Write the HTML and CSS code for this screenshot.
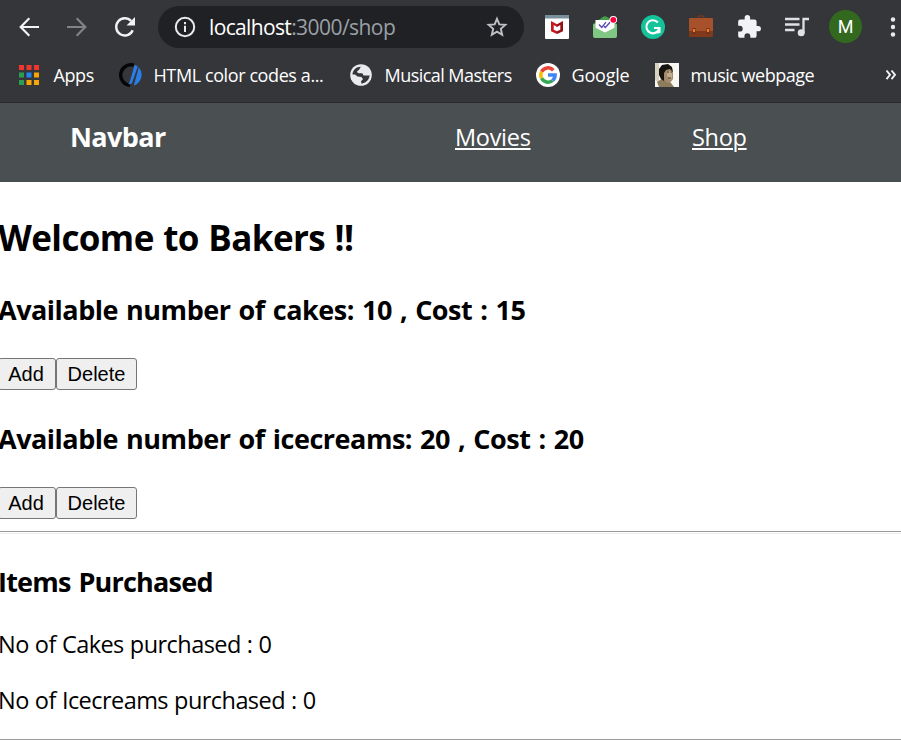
FILE: index.html
```
<!DOCTYPE html>
<html lang="en">
<head>
<meta charset="utf-8">
<title>Bakers</title>
<link rel="stylesheet" href="styles.css">
</head>
<body>
<header class="browser">
  <div class="toolbar">
    <svg class="back" width="20" height="20" viewBox="0 0 20 20" fill="none" stroke="#f1f3f4" stroke-width="2.2"><path d="M20 10H2M10.3 1.2 1.7 10l8.6 8.8"/></svg>
    <svg class="forward" width="20" height="20" viewBox="0 0 20 20" fill="none" stroke="#828386" stroke-width="2.2"><path d="M0 10h18M9.7 1.2l8.6 8.8-8.6 8.8"/></svg>
    <svg class="reload" width="22" height="22" viewBox="0 0 22 22"><path d="M18.7 14.2A8.6 8.6 0 1 1 17.1 5" fill="none" stroke="#f1f3f4" stroke-width="2.4"/><path d="M21 1v8.5h-8.5z" fill="#f1f3f4"/></svg>
    <div class="omnibox">
      <svg width="22" height="22" viewBox="0 0 22 22"><circle cx="11" cy="11" r="9.2" fill="none" stroke="#e8eaed" stroke-width="2"/><path d="M10 9.8h2V16h-2zM10 6h2v2.2h-2z" fill="#e8eaed"/></svg>
      <span class="url"><span class="host">localhost</span><span class="path">:3000/shop</span></span>
      <svg class="star" width="24" height="24" viewBox="0 0 24 24"><path d="m12 3.8 2.35 5.55 6 .52-4.55 3.95 1.37 5.87L12 16.57l-5.17 3.12 1.37-5.87-4.55-3.95 6-.52z" fill="none" stroke="#bdc1c6" stroke-width="1.9"/></svg>
    </div>
    <div class="extensions">
      <svg width="24" height="24" viewBox="0 0 24 24"><rect width="24" height="24" rx="1" fill="#fff"/><path d="M0 0h24v3.500H0z" fill="#78909c"/><path d="m6 6 6 3.200V12l-3.300-2v4.700l3.300 1.500V19l-6-2.800z" fill="#c8161d"/><path d="m12 9.200 6-3.200v10.200L12 19v-2.800l3.300-1.500V10L12 12z" fill="#951018"/></svg>
      <svg width="24" height="24" viewBox="0 0 24 24"><path d="M0 9 9.500 2.200Q12 .5 14.500 2.200L24 9v4H0z" fill="#43a047"/><path d="M0 10q0-1 1-1h22q1 0 1 1v11a2 2 0 0 1-2 2H2a2 2 0 0 1-2-2z" fill="#81c784"/><path d="M2.500 5h19v7.800L12 17.500 2.500 12.800z" fill="#fff"/><path d="m6 9.500 2.800 3L13 7.200m-2 4 1.300 1.300 5-5.500" fill="none" stroke="#5148b8" stroke-width="1.300"/><circle cx="20.300" cy="4.800" r="3.900" fill="#fff"/><circle cx="20.300" cy="4.800" r="2.900" fill="#f5003d"/></svg>
      <svg width="24" height="24" viewBox="0 0 24 24"><circle cx="12" cy="12" r="12" fill="#15c39a"/><path d="M16.800 7.500A6.500 6.500 0 1 0 18.300 13H13m5.500-.2V18M18 17.500h-3.500" fill="none" stroke="#fff" stroke-width="2.100"/></svg>
      <svg width="24" height="24" viewBox="0 0 24 24"><path d="M9 4V2.300Q9 1 10.300 1h3.400Q15 1 15 2.300V4" fill="none" stroke="#70371f" stroke-width="1.300"/><path d="M1 3h22a1 1 0 0 1 1 1v12H0V4a1 1 0 0 1 1-1z" fill="#a65129"/><path d="M0 16h24v5a1 1 0 0 1-1 1H1a1 1 0 0 1-1-1z" fill="#81391c"/><path d="M3.500 13h3v6h-3zM17.500 13h3v6h-3z" fill="#6f321a"/><path d="M4 14h2v3H4zM18 14h2v3h-2z" fill="#ef7d2d"/></svg>
      <svg width="26" height="26" viewBox="0 0 24 24"><path d="M20.500 11H19V7a2 2 0 0 0-2-2h-4V3.500a2.500 2.500 0 0 0-5 0V5H4a2 2 0 0 0-2 2v3.800h1.500a2.700 2.700 0 0 1 0 5.400H2V20a2 2 0 0 0 2 2h3.800v-1.500a2.700 2.700 0 0 1 5.400 0V22H17a2 2 0 0 0 2-2v-4h1.500a2.500 2.500 0 0 0 0-5z" fill="#f1f3f4"/></svg>
      <svg width="26" height="22" viewBox="0 0 26 22"><path d="M1 3h14.500M1 8.500h14.500M1 14h9.500M19.500 17V3H25" fill="none" stroke="#dee1e6" stroke-width="2.300"/><circle cx="17.200" cy="16.700" r="3.500" fill="#dee1e6"/></svg>
    </div>
    <div class="avatar">M</div>
    <svg class="menu" width="6" height="20" viewBox="0 0 6 20" fill="#e8eaed"><circle cx="3" cy="2.500" r="2.200"/><circle cx="3" cy="10" r="2.200"/><circle cx="3" cy="17.500" r="2.200"/></svg>
  </div>
  <div class="bookmarks">
    <div class="bookmark apps">
      <svg width="24" height="24" viewBox="0 0 24 24"><path d="M1 2h5v5H1zM8.500 2h5v5h-5zM16 2h5v5h-5z" fill="#f3352e"/><path d="M1 9.500h5v5H1zM1 17h5v5H1z" fill="#2a9f52"/><path d="M8.500 9.500h5v5h-5z" fill="#2385ed"/><path d="M16 9.500h5v5h-5zM8.500 17h5v5h-5zM16 17h5v5h-5z" fill="#f7a507"/></svg>
      <span>Apps</span>
    </div>
    <div class="bookmark codes">
      <svg width="24" height="24" viewBox="0 0 24 24"><path d="M16 2.200A10.300 10.300 0 1 0 12 22.300" fill="none" stroke="#050505" stroke-width="3.400"/><path d="m16.600 1.800 3.200 1.600-5.600 16.200q-.8 2-4.200 1.400 1.200-.4 1.800-2z" fill="#2b7de9"/><path d="M20.800 4.200q4.200 5 2.200 11-2 5.500-7.200 7.500z" fill="#2b7de9"/></svg>
      <span>HTML color codes a...</span>
    </div>
    <div class="bookmark musical">
      <svg width="24" height="24" viewBox="0 0 24 24"><circle cx="12" cy="12" r="10.800" fill="#e8eaed"/><path d="M12.500 3.800c-2 .3-1.200 2.500-3 3.500s-2 2.200 0 3h3.500c1.500.5.500 2.200 2.500 2.200h5.200c-.6 4.500-4 7.500-8.200 8.200l-.5-2.500 2-2-1.500-2.200-4-.5L6 11.500H3.500C3.500 7 7.500 3.500 12.500 3.800z" fill="#35363a"/><path d="M4 12.500 8 16l1 1.500 2 .5v3c-4 0-7.500-4-7-8.500z" fill="#e8eaed"/></svg>
      <span>Musical Masters</span>
    </div>
    <div class="bookmark google">
      <svg width="24" height="24" viewBox="0 0 24 24" fill="none" stroke-width="3.500"><circle cx="12" cy="12" r="12" fill="#fff"/><path d="M17.300 7.200A7.200 7.200 0 0 0 5.600 8.700" stroke="#ea4335"/><path d="M5.600 8.700a7.200 7.200 0 0 0 0 6.600" stroke="#fbbc05"/><path d="M5.600 15.300a7.200 7.200 0 0 0 11 2.200" stroke="#34a853"/><path d="M16.600 17.500A7 7 0 0 0 19.100 12H12" stroke="#4285f4"/></svg>
      <span>Google</span>
    </div>
    <div class="bookmark music">
      <svg width="24" height="24" viewBox="0 0 24 24"><path d="M0 0h24v24H0z" fill="#f8f7f2"/><path d="M0 0h4v20l-4-3z" fill="#d9d3bd"/><path d="m2 19 6-4 8 5 3 4H4z" fill="#8c7c5c"/><path d="M8 6h8l2 2v8l-3 4-4-1-4-5z" fill="#a28a6c"/><path d="M12 8h5v7l-2 2-3-4z" fill="#c2aa8b"/><path d="M6 16 4 12l0-6 3-4 6-1 4 3 1 5-3-3-4 1-2 3v8z" fill="#17130f"/><path d="M12 9h2m1.500 0H17M13 15h3" stroke="#43321f"/></svg>
      <span>music webpage</span>
    </div>
    <svg class="more" width="12" height="12" viewBox="0 0 12 12" fill="none" stroke="#f1f3f4" stroke-width="1.900"><path d="m1.500 1.500 3.500 4.300-3.500 4.300M6.500 1.500l3.500 4.300-3.500 4.300"/></svg>
  </div>
</header>
<nav class="navbar">
  <span class="brand">Navbar</span>
  <a class="movies" href="#">Movies</a>
  <a class="shop" href="#">Shop</a>
</nav>
<main class="content">
  <h1>Welcome to Bakers !!</h1>
  <h3>Available number of cakes: 10 , Cost : 15</h3>
  <div class="actions"><button class="add">Add</button><button class="delete">Delete</button></div>
  <h3>Available number of icecreams: 20 , Cost : 20</h3>
  <div class="actions"><button class="add">Add</button><button class="delete">Delete</button></div>
  <hr>
  <h3 class="items">Items Purchased</h3>
  <p>No of Cakes purchased : 0</p>
  <p>No of Icecreams purchased : 0</p>
  <hr class="end">
</main>
</body>
</html>
```
FILE: styles.css
```
* { box-sizing: border-box; }
body {
  margin: 0;
  height: 740px;
  overflow: hidden;
  background: #fff;
  color: #000;
  font-family: "Open Sans", "Noto Sans", sans-serif;
}
svg { display: block; flex: none; }

.browser { height: 103px; background: #35363a; border-bottom: 1px solid #292a2c; }
.toolbar { display: flex; align-items: center; height: 53px; padding-left: 19px; }
.forward { margin-left: 28px; }
.reload { margin-left: 27px; }
.omnibox {
  display: flex;
  align-items: center;
  width: 366px;
  height: 42px;
  margin: 1px 0 0 22px;
  padding: 0 15px 0 16px;
  border-radius: 21px;
  background: #202124;
}
.url { margin-left: 13px; font-size: 21px; line-height: 30px; white-space: pre; }
.host { color: #fff; letter-spacing: -0.65px; }
.path { color: #9aa0a6; letter-spacing: -0.55px; }
.star { margin-left: auto; }
.extensions { display: flex; align-items: center; gap: 24px; margin-left: 21px; }
.extensions svg:nth-child(5) { margin: 0 -1px 0 -1px; }
.extensions svg:nth-child(6) { margin-left: -1px; }
.avatar {
  width: 33px;
  height: 33px;
  margin-left: 19px;
  border-radius: 50%;
  background: #33691e;
  color: #fff;
  font: 18px/34px Roboto, sans-serif;
  text-align: center;
}
.menu { margin-left: 28px; }

.bookmarks { display: flex; align-items: center; height: 44px; padding-left: 18px; }
.bookmark { display: flex; align-items: center; color: #fff; font-size: 18px; line-height: 24px; white-space: nowrap; }
.bookmark span { margin-left: 11.5px; }
.apps { width: 100px; letter-spacing: -0.4px; }
.codes { width: 231px; letter-spacing: -0.4px; }
.musical { width: 187px; letter-spacing: -0.55px; }
.google { width: 119px; letter-spacing: -0.2px; }
.music { letter-spacing: -0.5px; }
.more { margin: 0 4px 0 auto; }

.navbar { display: flex; height: 79px; background: #4a4f52; color: #fff; }
.brand { width: 385px; margin-left: 70px; font-size: 27px; font-weight: 700; line-height: 67px; letter-spacing: -0.6px; }
.navbar a {
  color: #fff;
  font-size: 23.5px;
  line-height: 68px;
  letter-spacing: -0.3px;
  text-decoration-thickness: 2px;
  text-underline-offset: 2px;
}
.movies { width: 76px; }
.shop { margin-left: 161px; }

.content { display: flow-root; margin-left: -2px; white-space: nowrap; }
h1 { margin: 32px 0 0; font-size: 35px; line-height: 48px; letter-spacing: -0.6px; word-spacing: 1px; }
h3 { margin: 30px 0; font-size: 27px; line-height: 37px; letter-spacing: -0.48px; word-spacing: 1.5px; }
h1 + h3 { margin-top: 29px; }
.actions { display: flex; }
button {
  height: 32px;
  padding: 0;
  border: 1px solid #767676;
  border-radius: 3px;
  background: #efefef;
  color: #000;
  font: 20px/28px "Liberation Sans", Arial, sans-serif;
}
.add { width: 58px; padding-right: 2px; }
.delete { width: 81px; }
hr { height: 3px; margin: 12px 0 29px; border: solid #9a9a9a; border-width: 1px 0; border-bottom-color: #eee; }
.items { margin: 29px 0 28px; letter-spacing: -0.78px; }
p { margin: 0 0 24px; font-size: 23.5px; line-height: 32px; letter-spacing: -0.56px; word-spacing: 0.6px; }
.end { margin: 23px 0 0; }
p:last-of-type { margin-bottom: 23px; }
```
